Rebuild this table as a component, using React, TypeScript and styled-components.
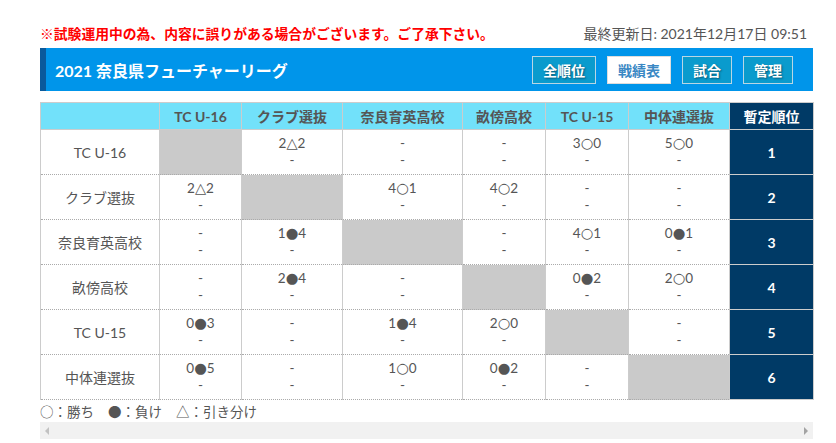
import styled, { createGlobalStyle } from 'styled-components';

const GlobalStyle = createGlobalStyle`
  html, body {
    margin: 0;
    padding: 0;
    background: #fff;
  }
  body {
    font-family: "Lato", "Noto Sans CJK JP", sans-serif;
    color: #555;
  }
`;

type Cell = string | null;

const teams = ['TC U-16', 'クラブ選抜', '奈良育英高校', '畝傍高校', 'TC U-15', '中体連選抜'];

const results: Cell[][] = [
  [null, '2△2', '-', '-', '3○0', '5○0'],
  ['2△2', null, '4○1', '4○2', '-', '-'],
  ['-', '1●4', null, '-', '4○1', '0●1'],
  ['-', '2●4', '-', null, '0●2', '2○0'],
  ['0●3', '-', '1●4', '2○0', null, '-'],
  ['0●5', '-', '1○0', '0●2', '-', null],
];

const colWidths = [119, 82, 101, 120, 83, 83, 101, 84];

const Page = styled.div`
  width: 773px;
  padding: 23px 0 0 40px;
`;

const TopLine = styled.div`
  display: flex;
  justify-content: space-between;
  align-items: center;
  height: 20px;
  padding-right: 6px;
  margin-bottom: 5px;
`;

const Notice = styled.span`
  color: #ff0000;
  font-weight: bold;
  font-size: 13.8px;
`;

const Updated = styled.span`
  color: #555;
  font-size: 14px;
`;

const HeaderBar = styled.div`
  display: flex;
  align-items: center;
  justify-content: space-between;
  height: 43px;
  box-sizing: border-box;
  background: #0095ea;
  border-left: 6px solid #0a5a9c;
  padding: 0 20px 0 9px;
`;

const Title = styled.h1`
  margin: 0;
  color: #fff;
  font-size: 16px;
  font-weight: bold;
`;

const Nav = styled.nav`
  display: flex;
  gap: 11px;
`;

const NavButton = styled.a<{ $active?: boolean }>`
  display: flex;
  align-items: center;
  height: 28px;
  box-sizing: border-box;
  padding: 0 10px;
  border: 1px solid ${(p) => (p.$active ? '#ddd' : '#b9d6e4')};
  background: ${(p) => (p.$active ? '#fff' : '#0a9bcd')};
  color: ${(p) => (p.$active ? '#3a88c4' : '#fff')};
  font-size: 14px;
  font-weight: bold;
  text-shadow: ${(p) => (p.$active ? 'none' : '1px 1px 2px rgba(0,0,0,0.45)')};
  cursor: pointer;
`;

const Standings = styled.table`
  margin-top: 11px;
  width: 773px;
  table-layout: fixed;
  border-collapse: collapse;
  border: 1px solid #ccc;
  border-bottom: 1px dotted #aaa;
  font-size: 13.5px;
`;

const HeadCell = styled.th<{ $rank?: boolean }>`
  height: 26px;
  padding: 0;
  background: ${(p) => (p.$rank ? '#003a66' : '#72e1fa')};
  color: ${(p) => (p.$rank ? '#fff' : '#555')};
  border: 1px solid #ccc;
  font-weight: bold;
  font-size: 14px;
  text-align: center;
`;

const Row = styled.tr`
  height: 45px;
  border-bottom: 1px dotted #aaa;
`;

const TeamCell = styled.td`
  padding: 0;
  text-align: center;
  border-right: 1px solid #ccc;
  font-size: 14px;
`;

const ScoreCell = styled.td<{ $self?: boolean }>`
  padding: 0;
  text-align: center;
  vertical-align: middle;
  border-right: 1px solid #ccc;
  background: ${(p) => (p.$self ? '#cacaca' : '#fff')};
`;

const ScoreLine = styled.div`
  height: 17px;
  line-height: 17px;
`;

const Mark = styled.span`
  font-family: "DejaVu Sans", sans-serif;
  font-size: 14.5px;
`;

const RankCell = styled.td`
  padding: 0;
  text-align: center;
  background: #003a66;
  color: #fff;
  font-weight: bold;
  font-size: 14px;
  border-top: 1px solid #ccc;
  border-bottom: 1px solid #ccc;
`;

const Legend = styled.div`
  height: 22px;
  display: flex;
  align-items: center;
  gap: 14px;
  font-size: 13.5px;
  color: #555;
  font-family: "Noto Sans CJK JP", sans-serif;
`;

const ScrollTrack = styled.div`
  height: 17px;
  background: #f1f1f1;
  display: flex;
  align-items: center;
  justify-content: space-between;
  padding: 0 5px;
`;

const Arrow = styled.span<{ $dir: 'left' | 'right' }>`
  width: 0;
  height: 0;
  border-top: 4px solid transparent;
  border-bottom: 4px solid transparent;
  ${(p) =>
    p.$dir === 'left'
      ? 'border-right: 4px solid #c2c2c2;'
      : 'border-left: 4px solid #a3a3a3;'}
`;

const Score = ({ value }: { value: string }) => {
  if (value.length < 3) return <>{value}</>;
  return (
    <>
      {value[0]}
      <Mark>{value[1]}</Mark>
      {value.slice(2)}
    </>
  );
};

const App = () => {
  return (
    <>
      <GlobalStyle />
      <Page>
        <TopLine>
          <Notice>※試験運用中の為、内容に誤りがある場合がございます。ご了承下さい。</Notice>
          <Updated>最終更新日: 2021年12月17日 09:51</Updated>
        </TopLine>
        <HeaderBar>
          <Title>2021 奈良県フューチャーリーグ</Title>
          <Nav>
            <NavButton>全順位</NavButton>
            <NavButton $active>戦績表</NavButton>
            <NavButton>試合</NavButton>
            <NavButton>管理</NavButton>
          </Nav>
        </HeaderBar>
        <Standings>
          <colgroup>
            {colWidths.map((w, i) => (
              <col key={i} style={{ width: w }} />
            ))}
          </colgroup>
          <thead>
            <tr>
              <HeadCell />
              {teams.map((t) => (
                <HeadCell key={t}>{t}</HeadCell>
              ))}
              <HeadCell $rank>暫定順位</HeadCell>
            </tr>
          </thead>
          <tbody>
            {teams.map((team, r) => (
              <Row key={team}>
                <TeamCell>{team}</TeamCell>
                {results[r].map((c, i) =>
                  c === null ? (
                    <ScoreCell key={i} $self />
                  ) : (
                    <ScoreCell key={i}>
                      <ScoreLine>
                        <Score value={c} />
                      </ScoreLine>
                      <ScoreLine>-</ScoreLine>
                    </ScoreCell>
                  )
                )}
                <RankCell>{r + 1}</RankCell>
              </Row>
            ))}
          </tbody>
        </Standings>
        <Legend>
          <span>○：勝ち</span>
          <span>●：負け</span>
          <span>△：引き分け</span>
        </Legend>
        <ScrollTrack>
          <Arrow $dir="left" />
          <Arrow $dir="right" />
        </ScrollTrack>
      </Page>
    </>
  );
};

export default App;
